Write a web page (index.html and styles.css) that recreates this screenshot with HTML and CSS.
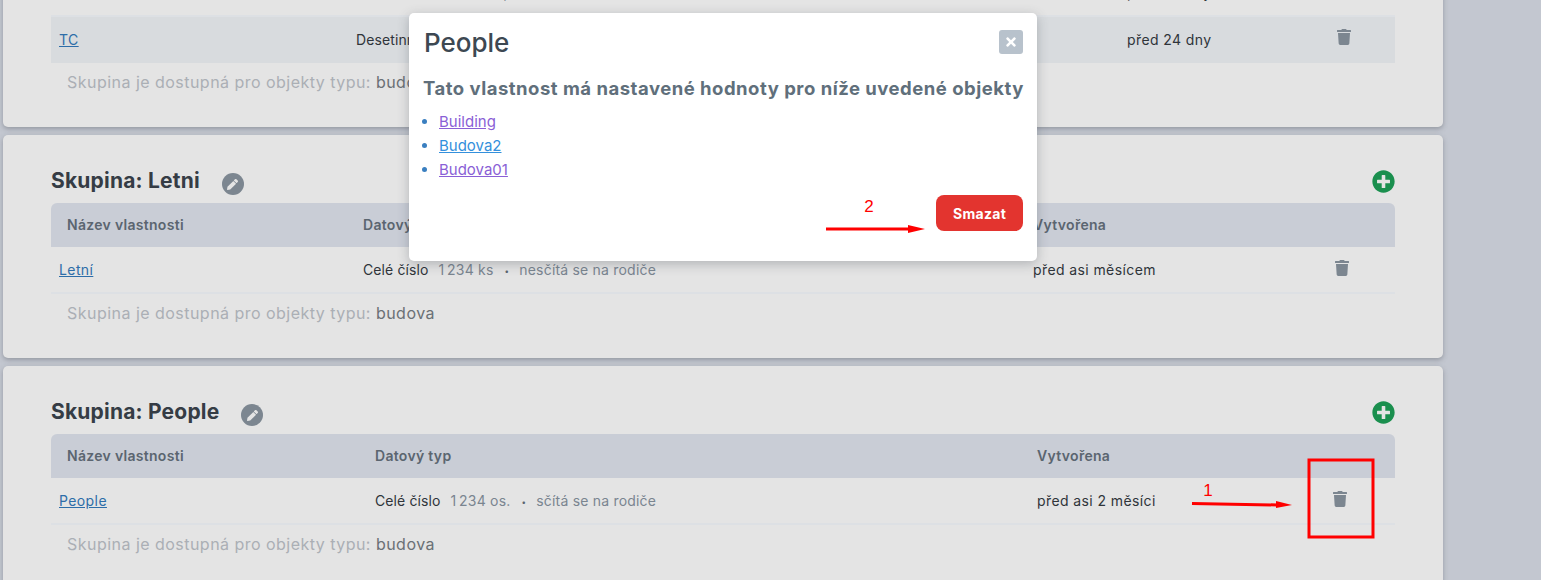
FILE: index.html

```html
<!DOCTYPE html>
<html lang="en">
<head>
    <meta charset="UTF-8">
    <meta name="viewport" content="width=device-width, initial-scale=1.0">
    <title>Vlastnosti</title>
    <link rel="stylesheet" href="styles.css">
</head>
<body>
    <svg class="icon-defs" aria-hidden="true">
        <symbol id="i-trash" viewBox="0 0 448 512"><path d="M432 32H312l-9.4-18.7A24 24 0 0 0 281.1 0H166.8a23.72 23.72 0 0 0-21.4 13.3L136 32H16A16 16 0 0 0 0 48v32a16 16 0 0 0 16 16h416a16 16 0 0 0 16-16V48a16 16 0 0 0-16-16zM53.2 467a48 48 0 0 0 47.9 45h245.8a48 48 0 0 0 47.9-45L416 128H32z"/></symbol>
        <symbol id="i-plus" viewBox="0 0 512 512"><path d="M256 8C119 8 8 119 8 256s111 248 248 248 248-111 248-248S393 8 256 8zm144 276c0 6.6-5.4 12-12 12h-92v92c0 6.6-5.4 12-12 12h-56c-6.6 0-12-5.4-12-12v-92h-92c-6.6 0-12-5.4-12-12v-56c0-6.6 5.4-12 12-12h92v-92c0-6.6 5.4-12 12-12h56c6.6 0 12 5.4 12 12v92h92c6.6 0 12 5.4 12 12v56z"/></symbol>
        <symbol id="i-pencil" viewBox="0 0 512 512"><path d="M497.9 142.1l-46.1 46.1c-4.7 4.7-12.3 4.7-17 0l-111-111c-4.7-4.7-4.7-12.3 0-17l46.1-46.1c18.7-18.7 49.1-18.7 67.9 0l60.1 60.1c18.8 18.7 18.8 49.1 0 67.9zM284.2 99.8L21.6 362.4.4 483.9c-2.9 16.4 11.4 30.6 27.8 27.8l121.5-21.3 262.6-262.6c4.7-4.7 4.7-12.3 0-17l-111-111c-4.8-4.7-12.4-4.7-17.1 0z"/></symbol>
        <symbol id="i-times" viewBox="0 0 352 512"><path d="M242.72 256l100.07-100.07c12.28-12.28 12.28-32.19 0-44.48l-22.24-22.24c-12.28-12.28-32.19-12.28-44.48 0L176 189.28 75.93 89.21c-12.28-12.28-32.19-12.28-44.48 0L9.21 111.45c-12.28 12.28-12.28 32.19 0 44.48L109.28 256 9.21 356.07c-12.28 12.28-12.28 32.19 0 44.48l22.24 22.24c12.28 12.28 32.2 12.28 44.48 0L176 322.72l100.07 100.07c12.28 12.28 32.2 12.28 44.48 0l22.24-22.24c12.28-12.28 12.28-32.19 0-44.48L242.72 256z"/></symbol>
    </svg>

    <div class="page">
        <section class="card">
            <div class="card-head">
                <h2>Skupina: TC</h2>
                <span class="edit-btn"><svg><use href="#i-pencil"/></svg></span>
                <svg class="add-btn"><use href="#i-plus"/></svg>
            </div>
            <table class="cols-a">
                <thead>
                    <tr><th>Název vlastnosti</th><th>Datový typ</th><th>Vytvořena</th><th></th></tr>
                </thead>
                <tbody>
                    <tr>
                        <td><a href="#">TUV</a></td>
                        <td>Desetinné číslo <span class="unit">1&thinsp;234,5 kWh</span></td>
                        <td>před 24 dny</td>
                        <td><svg class="trash"><use href="#i-trash"/></svg></td>
                    </tr>
                    <tr class="row-hover">
                        <td><a href="#">TC</a></td>
                        <td>Desetinné číslo <span class="unit">1&thinsp;234,5 kWh</span></td>
                        <td>před 24 dny</td>
                        <td><svg class="trash"><use href="#i-trash"/></svg></td>
                    </tr>
                </tbody>
            </table>
            <p class="note">Skupina je dostupná pro objekty typu: <span>budova</span></p>
        </section>

        <section class="card">
            <div class="card-head">
                <h2>Skupina: Letni</h2>
                <span class="edit-btn"><svg><use href="#i-pencil"/></svg></span>
                <svg class="add-btn"><use href="#i-plus"/></svg>
            </div>
            <table class="cols-b">
                <thead>
                    <tr><th>Název vlastnosti</th><th>Datový typ</th><th>Vytvořena</th><th></th></tr>
                </thead>
                <tbody>
                    <tr>
                        <td><a href="#">Letní</a></td>
                        <td>Celé číslo <span class="unit">1&thinsp;234 ks</span> <span class="dot">•</span> <span class="unit">nesčítá se na rodiče</span></td>
                        <td>před asi měsícem</td>
                        <td><svg class="trash"><use href="#i-trash"/></svg></td>
                    </tr>
                </tbody>
            </table>
            <p class="note">Skupina je dostupná pro objekty typu: <span>budova</span></p>
        </section>

        <section class="card">
            <div class="card-head">
                <h2>Skupina: People</h2>
                <span class="edit-btn"><svg><use href="#i-pencil"/></svg></span>
                <svg class="add-btn"><use href="#i-plus"/></svg>
            </div>
            <table class="cols-c">
                <thead>
                    <tr><th>Název vlastnosti</th><th>Datový typ</th><th>Vytvořena</th><th></th></tr>
                </thead>
                <tbody>
                    <tr>
                        <td><a href="#">People</a></td>
                        <td>Celé číslo <span class="unit">1&thinsp;234 os.</span> <span class="dot">•</span> <span class="unit">sčítá se na rodiče</span></td>
                        <td>před asi 2 měsíci</td>
                        <td><svg class="trash"><use href="#i-trash"/></svg></td>
                    </tr>
                </tbody>
            </table>
            <p class="note">Skupina je dostupná pro objekty typu: <span>budova</span></p>
        </section>
    </div>

    <div class="modal">
        <div class="modal-head">
            <h2>People</h2>
            <button class="close-btn"><svg><use href="#i-times"/></svg></button>
        </div>
        <h3>Tato vlastnost má nastavené hodnoty pro níže uvedené objekty</h3>
        <ul>
            <li><a class="seen" href="#">Building</a></li>
            <li><a href="#">Budova2</a></li>
            <li><a class="seen" href="#">Budova01</a></li>
        </ul>
        <div class="modal-foot">
            <button class="delete-btn">Smazat</button>
        </div>
    </div>

    <!-- red notes drawn over the screenshot -->
    <svg class="notes" width="1541" height="580">
        <rect x="1309" y="460" width="64" height="77" fill="none" stroke="#f00" stroke-width="3"/>
        <path d="M1192 503.5 L1278 505" stroke="#f00" stroke-width="3" fill="none"/>
        <path d="M1276 501 L1292 505 L1276 508z" fill="#f00"/>
        <text x="1208" y="496">1</text>
        <path d="M826 229 L908 229" stroke="#f00" stroke-width="3" fill="none"/>
        <path d="M908 225 L925 229 L908 233z" fill="#f00"/>
        <text x="869" y="212">2</text>
    </svg>
</body>
</html>
```

FILE: styles.css

```css
html, body {
    height: 100%;
}

body {
    margin: 0;
    height: 580px;
    overflow: hidden;
    position: relative;
    font-family: 'Inter', 'Liberation Sans', sans-serif;
    font-size: 14px;
    letter-spacing: 0.4px;
    color: #2f343a;
    background-color: #c3c7d0;
}

.icon-defs {
    display: none;
}

.page {
    width: 1440px;
    margin: -142px 0 0 3px;
    display: flex;
    flex-direction: column;
    gap: 8px;
}

.card {
    background-color: #e4e4e4;
    border-radius: 5px;
    padding: 0 48px;
    box-shadow: 0 2px 5px rgba(90, 95, 105, 0.45);
}

.card-head {
    height: 68px;
    display: flex;
    align-items: flex-end;
    position: relative;
}

.card-head h2 {
    margin: 0 0 9px 0;
    font-size: 21px;
    line-height: 26px;
    font-weight: 700;
    letter-spacing: 0.2px;
    color: #353c45;
}

.edit-btn {
    width: 22px;
    height: 22px;
    margin: 0 0 8px 22px;
    border-radius: 50%;
    background-color: #7c8690;
    display: flex;
    align-items: center;
    justify-content: center;
}

.edit-btn svg {
    width: 11px;
    height: 11px;
    fill: #e4e4e4;
}

.add-btn {
    width: 23px;
    height: 23px;
    margin: 0 0 10px auto;
    fill: #1a8f4e;
    background: radial-gradient(circle, #e4e4e4 50%, transparent 52%);
}

table {
    width: 1344px;
    border-collapse: collapse;
    table-layout: fixed;
}

th {
    box-sizing: border-box;
    height: 44px;
    padding: 0 0 2px 8px;
    text-align: left;
    font-weight: 600;
    letter-spacing: 0.3px;
    color: #5b6570;
    background-color: #c9cdd6;
}

th:first-child {
    padding-left: 16px;
    border-top-left-radius: 6px;
}

th:last-child {
    border-top-right-radius: 6px;
}

td {
    height: 45px;
    padding: 0 0 0 8px;
    border-bottom: 2px solid #dde0e4;
}

td:nth-child(2) {
    letter-spacing: 0.1px;
}

.row-hover td {
    background-color: #d8dbde;
    border-bottom: 0;
    height: 47px;
    padding-bottom: 2px;
    box-sizing: border-box;
}

.cols-a th:nth-child(1) { width: 297px; }
.cols-a th:nth-child(2) { width: 771px; }
.cols-a th:nth-child(3) { width: 210px; }

.cols-b th:nth-child(1) { width: 304px; }
.cols-b th:nth-child(2) { width: 670px; }
.cols-b th:nth-child(3) { width: 302px; }

.cols-c th:nth-child(1) { width: 316px; }
.cols-c th:nth-child(2) { width: 662px; }
.cols-c th:nth-child(3) { width: 296px; }

a {
    color: #2d6da8;
}

.unit {
    color: #7a8590;
    letter-spacing: 0.2px;
    margin-left: 6px;
}

.dot {
    color: #5b6570;
    font-size: 8px;
    margin-left: 7px;
    vertical-align: 1px;
}

.trash {
    display: block;
    width: 14px;
    height: 16px;
    margin-top: -4px;
    fill: #7c8690;
}

.note {
    margin: 0 0 0 16px;
    height: 64px;
    padding-top: 8px;
    box-sizing: border-box;
    font-size: 16px;
    letter-spacing: 0.47px;
    line-height: 22px;
    color: #abafb5;
}

.note span {
    color: #6b7075;
}

.modal {
    position: absolute;
    left: 409px;
    top: 13px;
    width: 628px;
    height: 248px;
    box-sizing: border-box;
    padding: 13px 14px 0 14px;
    background-color: #fff;
    border-radius: 5px;
    box-shadow: 0 3px 12px rgba(60, 65, 75, 0.3);
}

.modal-head {
    display: flex;
    justify-content: space-between;
    align-items: center;
    height: 32px;
}

.modal-head h2 {
    margin: 0 0 0 1px;
    font-size: 26px;
    font-weight: 500;
    letter-spacing: 0;
    color: #3d4852;
}

.close-btn {
    width: 24px;
    height: 24px;
    padding: 0;
    border: none;
    border-radius: 3px;
    background-color: #b8c2cc;
    display: flex;
    align-items: center;
    justify-content: center;
}

.close-btn svg {
    width: 10px;
    height: 14px;
    fill: #fff;
}

.modal h3 {
    margin: 18px 0 0 0;
    font-size: 18.5px;
    line-height: 24px;
    font-weight: 700;
    letter-spacing: 0.5px;
    color: #606f7b;
    white-space: nowrap;
}

.modal ul {
    margin: 10px 0 0 0;
    padding: 0 0 0 16px;
    color: #3a7fc0;
}

.modal li {
    line-height: 24px;
    font-size: 15px;
    letter-spacing: 0;
}

.modal li a {
    color: #3490dc;
}

.modal li a.seen {
    color: #8a5fd6;
}

.modal-foot {
    display: flex;
    justify-content: flex-end;
    margin-top: 13px;
}

.delete-btn {
    width: 87px;
    height: 36px;
    border: none;
    border-radius: 8px;
    background-color: #e3342f;
    color: #fff;
    font-family: inherit;
    font-size: 14px;
    letter-spacing: 0.3px;
    font-weight: 700;
}

.notes {
    position: absolute;
    left: 0;
    top: 0;
}

.notes text {
    font-family: 'Liberation Sans', sans-serif;
    font-size: 17px;
    letter-spacing: 0;
    fill: #f00;
    text-anchor: middle;
}
```
